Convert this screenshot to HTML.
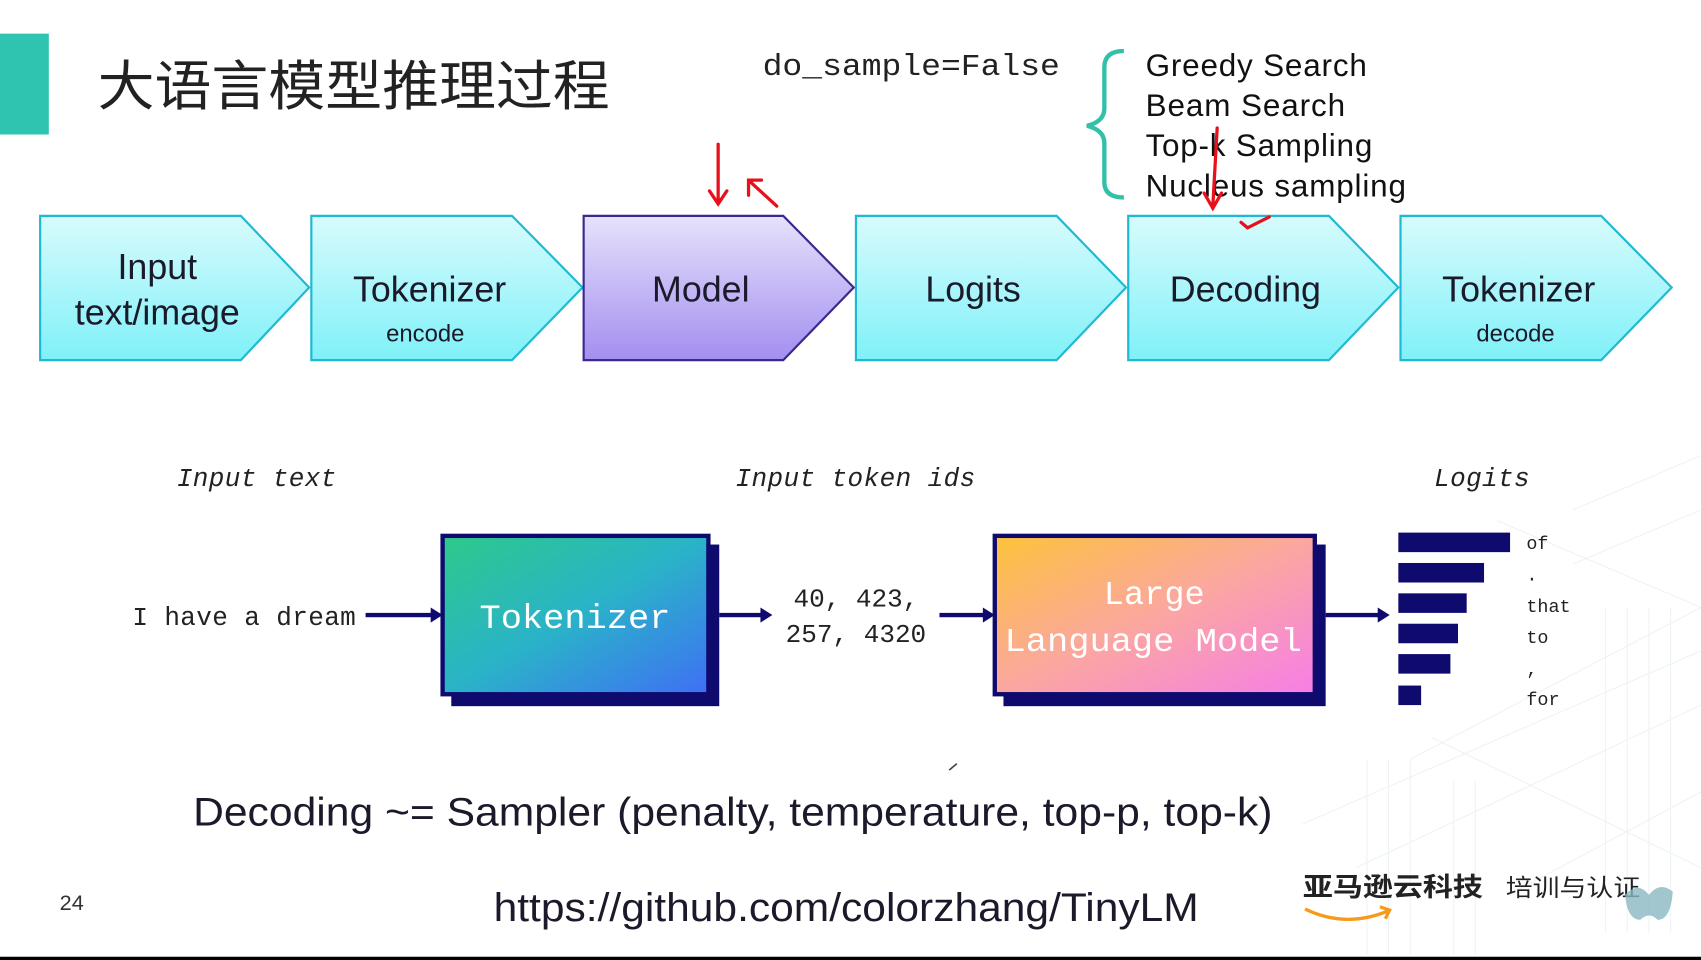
<!DOCTYPE html>
<html><head><meta charset="utf-8"><style>
html,body{margin:0;padding:0;background:#fff;overflow:hidden}
svg{display:block}
</style></head><body>
<svg width="1701" height="960" viewBox="0 0 1568 885" preserveAspectRatio="none" xmlns="http://www.w3.org/2000/svg">
<defs>
<linearGradient id="cy" x1="0" y1="0" x2="0" y2="1"><stop offset="0" stop-color="#d8fbfd"/><stop offset="1" stop-color="#7ff1f8"/></linearGradient>
<linearGradient id="pu" x1="0" y1="0" x2="0" y2="1"><stop offset="0" stop-color="#e6e2fb"/><stop offset="1" stop-color="#a48ef0"/></linearGradient>
<linearGradient id="tk" x1="0" y1="0" x2="1" y2="1"><stop offset="0" stop-color="#2ec98a"/><stop offset="0.5" stop-color="#2ab3c8"/><stop offset="1" stop-color="#3f6ff5"/></linearGradient>
<linearGradient id="lm" x1="0" y1="0" x2="1" y2="1"><stop offset="0" stop-color="#fcc33a"/><stop offset="0.5" stop-color="#fba7a0"/><stop offset="1" stop-color="#f67ee8"/></linearGradient>
</defs>
<rect width="1568" height="885" fill="#fff"/>
<g stroke="#eef3f3" stroke-width="1" fill="none">
<path d="M1450 470 L1568 420 M1450 520 L1568 470 M1300 700 L1568 560 M1200 760 L1568 600 M1250 800 L1568 650 M1400 820 L1568 730 M1380 480 L1568 560 M1320 680 L1568 800 M1480 560 v300 M1500 560 v300 M1520 560 v300 M1540 560 v300 M1260 700 v180 M1280 700 v180 M1300 700 v180 M1340 720 v160 M1360 720 v160"/>
</g>
<rect x="0" y="31" width="45" height="93" fill="#2ec4b0"/>
<text x="90" y="97" font-family="Liberation Sans,Noto Sans CJK SC,sans-serif" font-size="50" fill="#222" textLength="472" lengthAdjust="spacingAndGlyphs">大语言模型推理过程</text>
<text x="703" y="69" font-family="Liberation Mono,monospace" font-size="28" fill="#222" textLength="274" lengthAdjust="spacingAndGlyphs">do_sample=False</text>
<path d="M1036 47 Q1018 47 1018 62 L1018 100 Q1018 112 1002 116 Q1018 120 1018 132 L1018 168 Q1018 182 1036 182" stroke="#33c0a8" stroke-width="4" fill="none"/>
<g font-family="Liberation Sans,sans-serif" font-size="29" fill="#111" lengthAdjust="spacingAndGlyphs">
<text x="1056" y="70" textLength="204">Greedy Search</text><text x="1056" y="107" textLength="184">Beam Search</text><text x="1056" y="144" textLength="209">Top-k Sampling</text><text x="1056" y="181" textLength="240">Nucleus sampling</text></g>
<g stroke="#1fb8d6" stroke-width="2" fill="url(#cy)">
<path d="M37 199H222L285 265L222 332H37Z"/><path d="M287 199H472L537 265L472 332H287Z"/>
<path d="M789 199H974L1038 265L974 332H789Z"/><path d="M1040 199H1225L1289 265L1225 332H1040Z"/>
<path d="M1291 199H1476L1541 265L1476 332H1291Z"/></g>
<path d="M538 199H722L787 265L722 332H538Z" fill="url(#pu)" stroke="#3a2a90" stroke-width="2"/>
<g font-family="Liberation Sans,sans-serif" fill="#1a1a2a" text-anchor="middle" font-size="33">
<text x="145" y="257">Input</text><text x="145" y="299">text/image</text>
<text x="396" y="278">Tokenizer</text><text x="646" y="278">Model</text><text x="897" y="278">Logits</text>
<text x="1148" y="278">Decoding</text><text x="1400" y="278">Tokenizer</text>
<text x="392" y="315" font-size="22">encode</text><text x="1397" y="315" font-size="22">decode</text></g>
<g stroke="#e8101a" stroke-width="3" fill="none" stroke-linecap="round">
<path d="M662 133 L662 188 M654 176 L662 188 L670 176"/><path d="M716 190 L692 168 M690 180 L690 166 L702 166"/>
<path d="M1122 118 L1118 190 M1110 178 L1118 192 L1126 178"/><path d="M1144 205 L1150 210 L1170 200"/></g>
<g font-family="Liberation Mono,DejaVu Sans Mono,monospace" fill="#222" lengthAdjust="spacingAndGlyphs">
<text x="163" y="448" font-size="24" font-style="italic" textLength="147">Input text</text>
<text x="678" y="448" font-size="24" font-style="italic" textLength="221">Input token ids</text>
<text x="1322" y="448" font-size="24" font-style="italic" textLength="88">Logits</text>
<text x="122" y="576" font-size="24" textLength="206">I have a dream</text>
<text x="789" y="559" font-size="24" text-anchor="middle">40, 423,</text>
<text x="789" y="592" font-size="24" text-anchor="middle">257, 4320</text>
<g font-size="17"><text x="1407" y="506">of</text><text x="1407" y="535">.</text><text x="1407" y="564">that</text><text x="1407" y="593">to</text><text x="1407" y="622">,</text><text x="1407" y="650">for</text></g></g>
<rect x="416" y="502" width="247" height="149" fill="#0e0a6e"/>
<rect x="408" y="494" width="245" height="146" fill="url(#tk)" stroke="#0e0a6e" stroke-width="4"/>
<text x="442" y="579" font-family="Liberation Mono,monospace" font-size="32" fill="#fff" textLength="176" lengthAdjust="spacingAndGlyphs">Tokenizer</text>
<rect x="925" y="502" width="297" height="149" fill="#0e0a6e"/>
<rect x="917" y="494" width="295" height="146" fill="url(#lm)" stroke="#0e0a6e" stroke-width="4"/>
<text x="1064" y="557" font-family="Liberation Mono,monospace" font-size="31" fill="#fff" text-anchor="middle">Large</text>
<text x="926" y="600" font-family="Liberation Mono,monospace" font-size="31" fill="#fff" textLength="274" lengthAdjust="spacingAndGlyphs">Language Model</text>
<g fill="#0e0a6e">
<rect x="337" y="565" width="62" height="4"/><path d="M397 560L408 567L397 574Z"/>
<rect x="663" y="565" width="40" height="4"/><path d="M701 560L712 567L701 574Z"/>
<rect x="866" y="565" width="42" height="4"/><path d="M906 560L917 567L906 574Z"/>
<rect x="1222" y="565" width="50" height="4"/><path d="M1270 560L1281 567L1270 574Z"/>
<rect x="1289" y="491" width="103" height="18"/><rect x="1289" y="519" width="79" height="18"/><rect x="1289" y="547" width="63" height="18"/><rect x="1289" y="575" width="55" height="18"/><rect x="1289" y="603" width="48" height="18"/><rect x="1289" y="632" width="21" height="18"/></g>
<text x="178" y="761" font-family="Liberation Sans,sans-serif" font-size="37" fill="#1a1a2a" textLength="995" lengthAdjust="spacingAndGlyphs">Decoding ~= Sampler (penalty, temperature, top-p, top-k)</text>
<text x="455" y="849" font-family="Liberation Sans,sans-serif" font-size="37" fill="#1a1a2a" textLength="650" lengthAdjust="spacingAndGlyphs">https://github.com/colorzhang/TinyLM</text>
<text x="55" y="839" font-family="Liberation Sans,sans-serif" font-size="20" fill="#333">24</text>
<text x="1201" y="826" font-family="Noto Sans CJK SC,sans-serif" font-size="24" font-weight="bold" fill="#222" textLength="166" lengthAdjust="spacingAndGlyphs">亚马逊云科技</text>
<text x="1388" y="826" font-family="Noto Sans CJK SC,sans-serif" font-size="22" fill="#222" textLength="124" lengthAdjust="spacingAndGlyphs">培训与认证</text>
<path d="M1203 838 Q1240 856 1279 840 M1272 836 L1281 839 L1277 847" stroke="#f79a1c" stroke-width="3" fill="none"/>
<path d="M1498 825 Q1510 812 1520 825 Q1530 812 1542 822 Q1540 848 1528 848 Q1520 840 1512 848 Q1500 848 1498 825Z" fill="#8ab8c0" opacity="0.8"/>
<path d="M875 710 L882 704" stroke="#444" stroke-width="1.5"/>
<rect x="0" y="882" width="1568" height="3" fill="#000"/>
</svg>
</body></html>
